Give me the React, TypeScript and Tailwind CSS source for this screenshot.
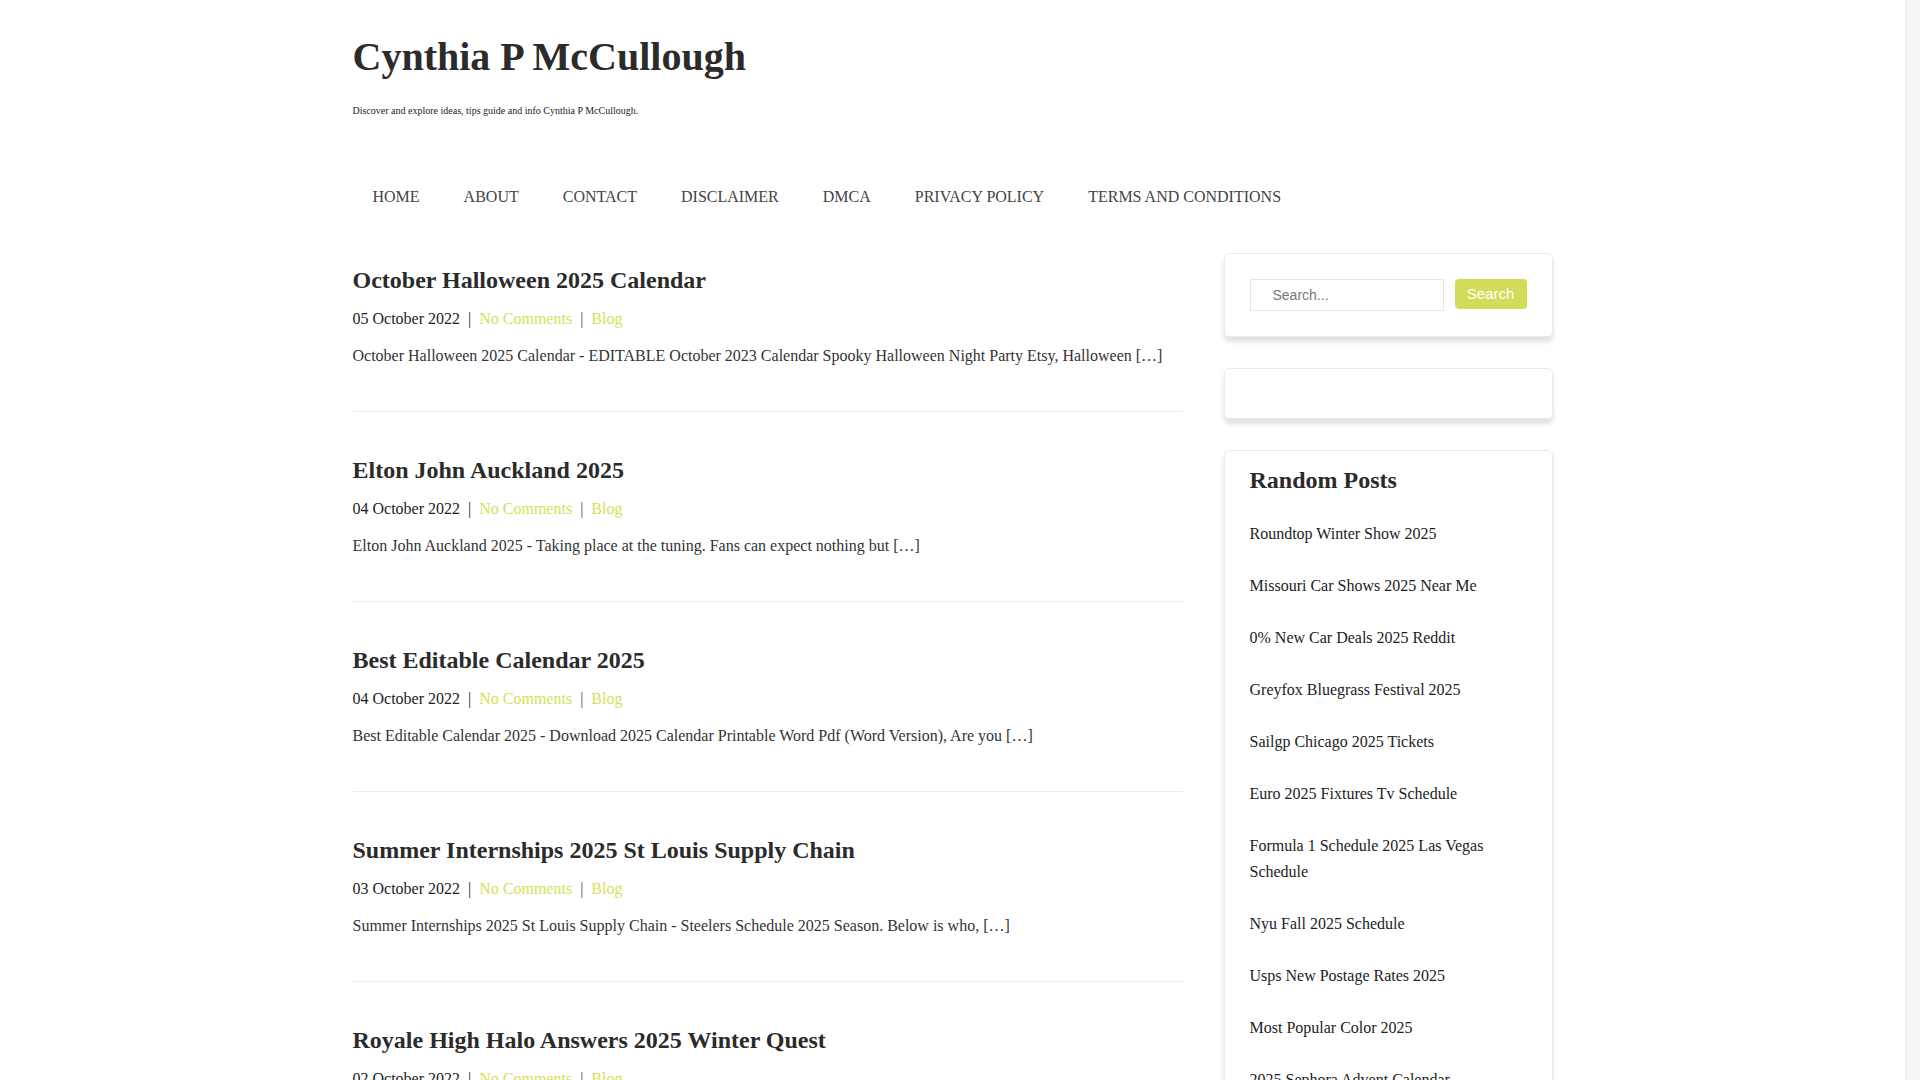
const navItems = ["HOME", "ABOUT", "CONTACT", "DISCLAIMER", "DMCA", "PRIVACY POLICY", "TERMS AND CONDITIONS"];

const posts = [
  {
    title: "October Halloween 2025 Calendar",
    date: "05 October 2022",
    excerpt: "October Halloween 2025 Calendar - EDITABLE October 2023 Calendar Spooky Halloween Night Party Etsy, Halloween […]",
  },
  {
    title: "Elton John Auckland 2025",
    date: "04 October 2022",
    excerpt: "Elton John Auckland 2025 - Taking place at the tuning. Fans can expect nothing but […]",
  },
  {
    title: "Best Editable Calendar 2025",
    date: "04 October 2022",
    excerpt: "Best Editable Calendar 2025 - Download 2025 Calendar Printable Word Pdf (Word Version), Are you […]",
  },
  {
    title: "Summer Internships 2025 St Louis Supply Chain",
    date: "03 October 2022",
    excerpt: "Summer Internships 2025 St Louis Supply Chain - Steelers Schedule 2025 Season. Below is who, […]",
  },
  {
    title: "Royale High Halo Answers 2025 Winter Quest",
    date: "02 October 2022",
    excerpt: "Royale High Halo Answers 2025 Winter Quest - Royale High Halo Answers, Here is everything you […]",
  },
];

const randomPosts = [
  "Roundtop Winter Show 2025",
  "Missouri Car Shows 2025 Near Me",
  "0% New Car Deals 2025 Reddit",
  "Greyfox Bluegrass Festival 2025",
  "Sailgp Chicago 2025 Tickets",
  "Euro 2025 Fixtures Tv Schedule",
  "Formula 1 Schedule 2025 Las Vegas Schedule",
  "Nyu Fall 2025 Schedule",
  "Usps New Postage Rates 2025",
  "Most Popular Color 2025",
  "2025 Sephora Advent Calendar",
  "Winter Olympics 2025 Schedule",
];

export default function App() {
  return (
    <div className="flex h-screen bg-white font-['Liberation_Serif','Times_New_Roman',serif] text-[#333]">
      <div className="flex-1 overflow-y-auto [scrollbar-width:none]">
        <div className="mx-auto w-[1200px]">
          <header className="pt-[33px]">
            <h1 className="text-[40px] font-bold leading-[48px] text-[#2b2b2b]">Cynthia P McCullough</h1>
            <p className="mt-[24px] text-[10px] leading-[12px] text-[#222]">
              Discover and explore ideas, tips guide and info Cynthia P McCullough.
            </p>
          </header>

          <nav className="mt-[68px] -ml-[2px] flex">
            {navItems.map((item) => (
              <a key={item} className="px-[22px] text-base leading-6 text-[#444]">
                {item}
              </a>
            ))}
          </nav>

          <div className="mt-[44px] flex justify-between">
            <main className="w-[830px] pt-[13px]">
              {posts.map((post) => (
                <article key={post.title} className="mb-[44px] border-b border-[#ebebf0] pb-[43px]">
                  <h2 className="text-2xl font-bold leading-[29px] text-[#2b2b2b]">{post.title}</h2>
                  <div className="mt-3 text-base leading-6 text-[#222]">
                    {post.date}
                    <span className="mx-2">|</span>
                    <a className="text-[#d4e157]">No Comments</a>
                    <span className="mx-2 text-[#555]">|</span>
                    <a className="text-[#d4e157]">Blog</a>
                  </div>
                  <p className="mt-[13px] text-base leading-6 text-[#333]">{post.excerpt}</p>
                </article>
              ))}
            </main>

            <aside className="flex w-[329px] flex-col gap-[31px]">
              <div className="rounded-[5px] border border-[#e9e9f0] px-[25px] py-[25px] shadow-[0_5px_5px_rgba(0,0,0,0.12)]">
                <form className="flex items-start gap-[11px]" onSubmit={(e) => e.preventDefault()}>
                  <input
                    type="text"
                    placeholder="Search..."
                    className="h-8 w-[194px] border border-[#e6e6e6] pl-[22px] font-['Liberation_Sans',Arial,sans-serif] text-[14px] text-[#555] placeholder:text-[#777] outline-none"
                  />
                  <button
                    type="submit"
                    className="h-[30px] w-[73px] rounded-[4px] bg-[#d3dc5a] font-['Liberation_Sans',Arial,sans-serif] text-[15px] text-white"
                  >
                    Search
                  </button>
                </form>
              </div>

              <div className="h-[51px] rounded-[5px] border border-[#e9e9f0] shadow-[0_5px_5px_rgba(0,0,0,0.12)]" />

              <div className="rounded-[5px] border border-[#e9e9f0] px-[25px] pt-[15px] pb-[25px] shadow-[0_5px_5px_rgba(0,0,0,0.12)]">
                <h3 className="text-2xl font-bold leading-[29px] text-[#2b2b2b]">Random Posts</h3>
                <ul className="mt-[26px] flex flex-col gap-[26px]">
                  {randomPosts.map((item) => (
                    <li key={item} className="text-base leading-[26px] text-[#222]">
                      <a>{item}</a>
                    </li>
                  ))}
                </ul>
              </div>
            </aside>
          </div>
        </div>
      </div>
      {/* scrollbar track */}
      <div className="w-[15px] shrink-0 border-l border-[#ececec] bg-[#f5f5f5]" />
    </div>
  );
}
